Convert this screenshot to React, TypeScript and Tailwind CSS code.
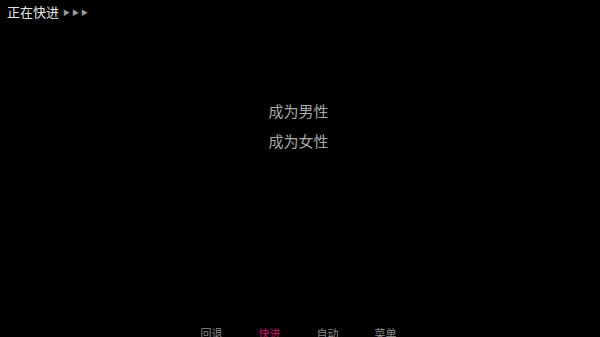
export default function App() {
  const menu = [
    { label: '回退', active: false },
    { label: '快进', active: true },
    { label: '自动', active: false },
    { label: '菜单', active: false },
  ];

  return (
    <div
      className="w-[600px] h-[337px] overflow-hidden bg-black flex flex-col"
      style={{ fontFamily: '"Noto Sans CJK SC", "Noto Sans", sans-serif' }}
    >
      {/* fast-forward indicator */}
      <div className="shrink-0 h-[26px] pl-[7px] pb-[2px] flex items-center gap-[4px] text-[13px] leading-[16px] text-[#e6e6e6]">
        <span>正在快进</span>
        <span className="text-[7px] tracking-[2px] text-[#9a9a9a]">▶▶▶</span>
      </div>

      {/* choices */}
      <div className="shrink-0 mt-[70px] flex flex-col items-center pr-[3px] text-[15px] leading-[30px] text-[#a8a8a8]">
        <div>成为男性</div>
        <div>成为女性</div>
      </div>

      {/* quick menu */}
      <div className="shrink-0 mt-[171px] flex justify-center pr-[3px] text-[11px] leading-[12px]">
        {menu.map(item => (
          <div
            key={item.label}
            className={`w-[58px] text-center ${item.active ? 'text-[#c8186a]' : 'text-[#8a8a8a]'}`}
          >
            {item.label}
          </div>
        ))}
      </div>
    </div>
  );
}
